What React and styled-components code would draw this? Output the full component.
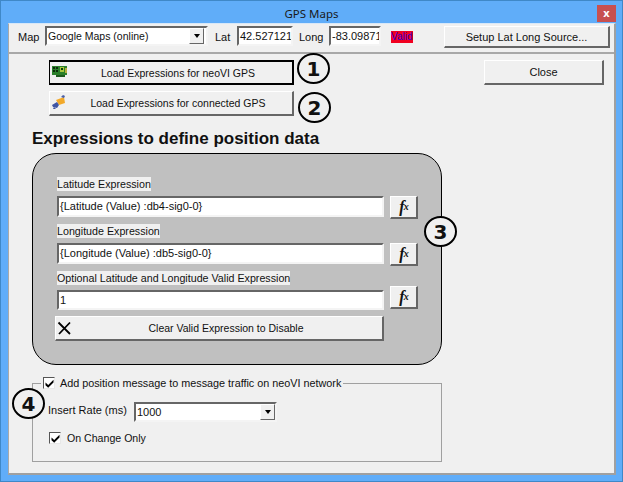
import React from "react";
import styled, { createGlobalStyle } from "styled-components";

const Global = createGlobalStyle`
  html, body { margin: 0; padding: 0; background: #5fadf9; }
  * { box-sizing: border-box; }
`;
const Window = styled.div`
  width: 623px; height: 482px; background: #60adf9; border: 1px solid #3f88c8;
  display: flex; flex-direction: column; overflow: hidden; position: relative;
  font-family: "Liberation Sans", Tahoma, sans-serif; font-size: 11px; color: #111;
`;
const TitleBar = styled.div`
  height: 22px; flex: none; position: relative; display: flex; align-items: center; justify-content: center;
  font-family: "Noto Sans", sans-serif; font-size: 11.5px; color: #1a1a1a; padding-top: 2px;
`;
const CloseX = styled.div`
  position: absolute; right: 6px; top: 4px; width: 19px; height: 17px; background: #c75050;
  color: #fff; font-weight: 700; font-size: 11px; line-height: 15px; text-align: center;
`;
const Client = styled.div`
  margin: 0 6px 6px 7px; flex: 1; background: #f0f0f0; border: 1px solid #e8e8e8;
  border-right: 2px solid #a0a0a0; border-bottom: 2px solid #a0a0a0; border-left-color: #a9a9a9; border-top-color:#d8e8f8;
  display: flex; flex-direction: column; position: relative;
`;
const Toolbar = styled.div`
  height: 30px; flex: none; border-bottom: 2px solid #a8a8a8; display: flex; align-items: flex-start;
  padding: 2px 0 0 9px;
`;
const ToolLabel = styled.span`
  width: ${p => p.$w}px; flex: none; padding-left: ${p => p.$pl || 0}px;
  margin-top: 3px; line-height: 16px; white-space: nowrap;
`;
const Sunken = styled.div`
  background: #fff; height: ${p => p.$h || 21}px; width: ${p => p.$w}px; flex: none;
  margin-top: ${p => p.$mt || 0}px;
  border-top: 2px solid #666; border-left: 2px solid #666; border-right: 2px solid #f4f4f4; border-bottom: 2px solid #f4f4f4;
  line-height: 16px; padding-left: 1px; white-space: nowrap; overflow: hidden; position: relative;
  font-size: ${p => p.$fs || 11}px; color: #111;
`;
const DropBtn = styled.span`
  position: absolute; right: ${p => p.$gap || 0}px; top: 0; bottom: 0; width: 15px; background: #f0f0f0;
  border-top: 1px solid #fff; border-left: 1px solid #fff; border-right: 1px solid #666; border-bottom: 1px solid #666;
  display: flex; align-items: center; justify-content: center;
  &::after { content: ""; border: 3.5px solid transparent; border-top: 4px solid #000; border-bottom: 0; }
`;
const ValidTag = styled.span`
  background: #f00020; color: #3a00c8; width: 22px; height: 12px; line-height: 12px; font-size: 10px;
  margin: 5px 31px 0 10px; overflow: hidden; flex: none; white-space: nowrap;
`;
const Btn = styled.button`
  font: inherit; font-size: ${p => p.$fs || 11}px; color: #111; background: #f0f0f0; padding: 0 0 0 ${p => p.$pl || 0}px; margin: 0; flex: none;
  width: ${p => p.$w}px; height: ${p => p.$h || 25}px;
  border-style: solid; border-width: 1px 2px 2px 1px;
  border-color: ${p => p.$focus ? "#000" : "#fff #666 #666 #fff"};
  ${p => p.$focus ? "outline: none; border-width: 2px 2px 2px 1px;" : ""}
  position: relative; display: flex; align-items: center; justify-content: center;
`;
const BtnIcon = styled.span`
  position: absolute; left: ${p => p.$l}px; top: ${p => p.$t}px; display: flex;
`;
const Body = styled.div`
  flex: 1; display: flex; flex-direction: column; padding: 6px 0 0 23px; position: relative;
`;
const TopRow = styled.div`
  display: flex; justify-content: space-between; align-items: flex-start; padding: 0 10px 0 17px;
`;
const LoadCol = styled.div`
  display: flex; flex-direction: column; gap: 6px; position: relative;
`;
const Heading = styled.h2`
  margin: 11px 0 0 0; height: 26px; font: 700 17px/24px "Liberation Sans", Arial, sans-serif; color: #111;
`;
const Panel = styled.div`
  width: 410px; height: 212px; background: #c0c0c0; border: 1px solid #000;
  border-radius: 24px; padding: 23px 0 0 22px; position: relative; flex: none;
`;
const FieldLabel = styled.div`
  background: #f0f0f0; display: table; font-size: 10.7px; line-height: 14px; height: 14px; margin: 0 0 ${p => p.$mb ?? 5}px 2px; white-space: nowrap;
`;
const FieldRow = styled.div`
  display: flex; gap: 6px; align-items: flex-start; margin: 0 0 ${p => p.$mb || 5}px ${p => p.$ml ?? 2}px;
`;
const FxBtn = styled(Btn)`
  font: italic 700 16px/1 "Liberation Serif", serif; letter-spacing: -1px;
  small { font-size: 10px; }
`;
const Group = styled.fieldset`
  width: 410px; height: 86px; margin: 11px 0 0 0; padding: 0 0 0 15px;
  border: 1px solid #a0a0a0; position: relative;
`;
const Legend = styled.legend`
  margin-left: -7px; padding: 0 2px 0 2px; height: 14px; display: flex; align-items: center; gap: 5px; line-height: 14px; font-size: 10.8px;
`;
const Check = styled.span`
  width: 12px; height: 12px; flex: none; background: #fff; border: 1px solid; border-color: #555 #e8e8e8 #e8e8e8 #555;
  display: flex; align-items: center; justify-content: center;
`;
const RateRow = styled.div`
  display: flex; align-items: center; margin-top: 12px;
`;
const RateLabel = styled.span`
  width: 86px; flex: none; margin-top: -4px;
`;
const ChangeRow = styled.div`
  display: flex; align-items: center; gap: 6px; margin: 10px 0 0 1px; font-size: 10.6px;
`;
const Circle = styled.div`
  position: absolute; left: ${p => p.$x}px; top: ${p => p.$y}px; width: 33px; height: 31px; border-radius: 50%;
  border: 2px solid #000; background: #f0f0f0; display: flex; align-items: center; justify-content: center;
  font: 700 20px/1 "DejaVu Sans", sans-serif; color: #111;
`;

const Tick = () => (
  <svg width="9" height="9" viewBox="0 0 9 9"><path d="M0.5 3.6 L3.2 6 L8.5 0.8 L8.5 3.6 L3.2 8.8 L0.5 6.2Z" fill="#000" /></svg>
);
const Chip = () => (
  <svg width="17" height="17" viewBox="0 0 17 17">
    <rect x="1" y="3" width="15" height="9" fill="#2a7f2a" />
    <rect x="2" y="4" width="2" height="2" fill="#0a2a0a" /><rect x="5" y="4" width="2" height="2" fill="#0a2a0a" />
    <rect x="2" y="7" width="2" height="2" fill="#0a2a0a" /><rect x="5" y="7" width="2" height="2" fill="#0a2a0a" />
    <rect x="9" y="4" width="4" height="5" fill="#a8c83c" /><rect x="10" y="5" width="2" height="2" fill="#0a3a0a" />
    <rect x="5" y="12" width="9" height="2" fill="#1c5a1c" /><rect x="14" y="5" width="2" height="5" fill="#b8b040" />
  </svg>
);
const Plug = () => (
  <svg width="15" height="15" viewBox="0 0 15 15">
    <path d="M4 5 L12 2 L13 8 L7 10Z" fill="#f2a92a" />
    <path d="M9 2 L11 0 L13 1 L12 3Z" fill="#4a5fa8" />
    <path d="M0 10 L5 7 L7 10 L5 13 L1 12Z" fill="#3f55a5" />
    <path d="M2 12 L4 14 L1 14Z" fill="#3f55a5" />
  </svg>
);
const XMark = () => (
  <svg width="15" height="15" viewBox="0 0 15 15"><path d="M1.5 1.5 L13 13 M13 1.5 L2 13" stroke="#000" strokeWidth="1.8" /></svg>
);

export default function App() {
  return (
    <>
      <Global />
      <Window>
        <TitleBar>GPS Maps<CloseX>x</CloseX></TitleBar>
        <Client>
          <Toolbar>
            <ToolLabel $w={27}>Map</ToolLabel>
            <Sunken $w={163} $h={20} $fs={10.5}>Google Maps (online)<DropBtn $gap={2} /></Sunken>
            <ToolLabel $w={29} $pl={7}>Lat</ToolLabel>
            <Sunken $w={56} $h={20}>42.527121</Sunken>
            <ToolLabel $w={36} $pl={6}>Long</ToolLabel>
            <Sunken $w={52} $h={20}>-83.09871</Sunken>
            <ValidTag>Valid</ValidTag>
            <Btn $w={166} $h={22}>Setup Lat Long Source...</Btn>
          </Toolbar>
          <Body>
            <TopRow>
              <LoadCol>
                <Btn $w={245} $focus $pl={14} $fs={10.5}><BtnIcon $l={1} $t={1}><Chip /></BtnIcon>Load Expressions for neoVI GPS</Btn>
                <Btn $w={245} $pl={14} $fs={10.5}><BtnIcon $l={2} $t={3}><Plug /></BtnIcon>Load Expressions for connected GPS</Btn>
                <Circle $x={248} $y={-7}>1</Circle>
                <Circle $x={249} $y={32}>2</Circle>
              </LoadCol>
              <Btn $w={120}>Close</Btn>
            </TopRow>
            <Heading>Expressions to define position data</Heading>
            <Panel>
              <FieldLabel>Latitude Expression</FieldLabel>
              <FieldRow>
                <Sunken $w={327}>{"{Latitude (Value) :db4-sig0-0}"}</Sunken>
                <FxBtn $w={28} $h={23}><span>f</span><small>x</small></FxBtn>
              </FieldRow>
              <FieldLabel>Longitude Expression</FieldLabel>
              <FieldRow>
                <Sunken $w={327}>{"{Longitude (Value) :db5-sig0-0}"}</Sunken>
                <FxBtn $w={28} $h={23}><span>f</span><small>x</small></FxBtn>
              </FieldRow>
              <FieldLabel $mb={1}>Optional Latitude and Longitude Valid Expression</FieldLabel>
              <FieldRow $mb={6}>
                <Sunken $w={327} $h={20} $mt={4}>1</Sunken>
                <FxBtn $w={28} $h={23}><span>f</span><small>x</small></FxBtn>
              </FieldRow>
              <FieldRow $ml={0}>
                <Btn $w={329} $h={25} $pl={14} $fs={10.5}><BtnIcon $l={1} $t={4}><XMark /></BtnIcon>Clear Valid Expression to Disable</Btn>
              </FieldRow>
              <Circle $x={391} $y={62}>3</Circle>
            </Panel>
            <Group>
              <Legend><Check><Tick /></Check>Add position message to message traffic on neoVI network</Legend>
              <RateRow>
                <RateLabel>Insert Rate (ms)</RateLabel>
                <Sunken $w={143} $h={20}>1000<DropBtn /></Sunken>
              </RateRow>
              <ChangeRow><Check><Tick /></Check>On Change Only</ChangeRow>
              <Circle $x={-21} $y={-2}>4</Circle>
            </Group>
          </Body>
        </Client>
      </Window>
    </>
  );
}
